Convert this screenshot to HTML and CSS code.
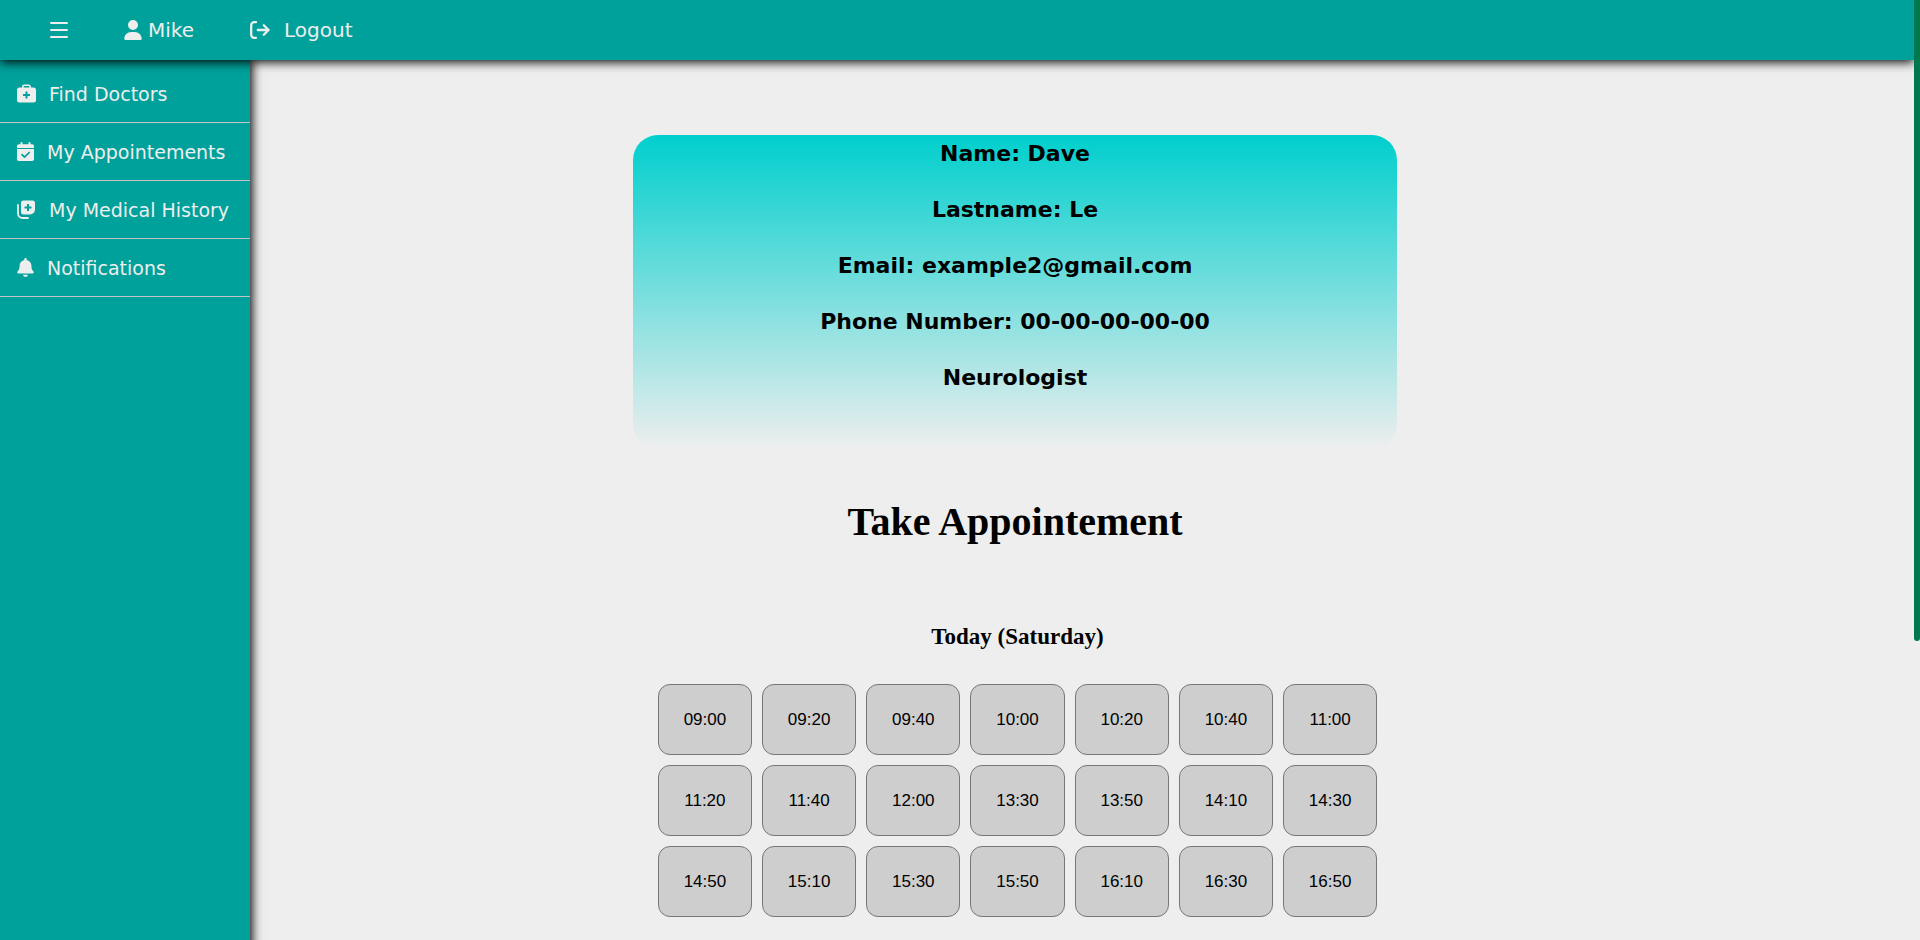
FILE: index.html
```html
<!DOCTYPE html>
<html lang="en">
<head>
<meta charset="utf-8">
<title>Take Appointement</title>
<link rel="stylesheet" href="styles.css">
</head>
<body>
<div class="page">
  <header class="topbar">
    <button class="menu-toggle" type="button" aria-label="Toggle menu">
      <svg class="icon-bars" viewBox="0 0 18 16" aria-hidden="true"><path d="M1 1h16M1 8h16M1 15h16" fill="none" stroke="currentColor" stroke-width="2" stroke-linecap="round"/></svg>
    </button>
    <a class="user" href="#profile">
      <svg class="icon-user" viewBox="0 0 448 512" aria-hidden="true"><path fill="currentColor" d="M224 256A128 128 0 1 0 224 0a128 128 0 1 0 0 256zm-45.700 48C79.800 304 0 383.800 0 482.300 0 498.700 13.300 512 29.700 512h388.600c16.400 0 29.700-13.300 29.700-29.700 0-98.500-79.800-178.300-178.300-178.300z"/></svg>
      <span>Mike</span>
    </a>
    <a class="logout" href="#logout">
      <svg class="icon-logout" viewBox="0 0 20 18" aria-hidden="true"><g fill="none" stroke="currentColor" stroke-width="2.300" stroke-linecap="round" stroke-linejoin="round"><path d="M6 1.200H4.200a3 3 0 0 0-3 3v9.600a3 3 0 0 0 3 3H6"/><path d="M7.800 9H18.500M13.800 4.200l4.800 4.800-4.800 4.800"/></g></svg>
      <span>Logout</span>
    </a>
  </header>

  <div class="body">
    <nav class="sidebar" aria-label="Main">
      <ul class="nav-list">
        <li><a class="nav-link" href="#doctors">
          <svg class="nav-icon wide" viewBox="0 0 19 18" aria-hidden="true"><path fill="none" stroke="currentColor" stroke-width="1.600" d="M5.800 4V2.300a1.500 1.500 0 0 1 1.500-1.500h4.400a1.500 1.500 0 0 1 1.500 1.500V4"/><path fill="currentColor" fill-rule="evenodd" d="M2.500 3h14A2.500 2.500 0 0 1 19 5.500v10a2.500 2.500 0 0 1-2.500 2.500h-14A2.500 2.500 0 0 1 0 15.500v-10A2.500 2.500 0 0 1 2.500 3zM8.500 7v2.500H6v2h2.500V14h2v-2.500H13v-2h-2.500V7z"/></svg>
          <span>Find Doctors</span></a></li>
        <li><a class="nav-link" href="#appointements">
          <svg class="nav-icon" viewBox="0 0 17 19" aria-hidden="true"><path fill="currentColor" d="M3.500 1a1 1 0 0 1 2 0v1.200h6V1a1 1 0 0 1 2 0v1.200h1.700A1.800 1.800 0 0 1 17 4v2H0V4a1.800 1.800 0 0 1 1.800-1.800h1.700z"/><path fill="currentColor" d="M0 7h17v10.200a1.800 1.800 0 0 1-1.800 1.800H1.800A1.800 1.800 0 0 1 0 17.200z"/><path class="cutout" d="M5 12.700l2.500 2.500 4.700-4.700" stroke-width="1.700" fill="none" stroke-linecap="round" stroke-linejoin="round"/></svg>
          <span>My Appointements</span></a></li>
        <li><a class="nav-link" href="#history">
          <svg class="nav-icon wide" viewBox="0 0 19 19" aria-hidden="true"><path fill="none" stroke="currentColor" stroke-width="1.800" stroke-linecap="round" d="M1 5v8.500A4.500 4.500 0 0 0 5.500 18H11"/><path fill="currentColor" fill-rule="evenodd" d="M6.500 0.500h9A2.500 2.500 0 0 1 18 3v6.500a5 5 0 0 1-5 5H6.500A2.500 2.500 0 0 1 4 12V3A2.500 2.500 0 0 1 6.500 .5zM10 4v2.500H7.500v2H10V11h2V8.500h2.500v-2H12V4z"/></svg>
          <span>My Medical History</span></a></li>
        <li><a class="nav-link" href="#notifications">
          <svg class="nav-icon" viewBox="0 0 448 512" aria-hidden="true"><path fill="currentColor" d="M224 0c-17.700 0-32 14.300-32 32v19.200C119 66 64 130.600 64 208v18.800c0 47-17.300 92.400-48.500 127.600l-7.400 8.300c-8.400 9.400-10.400 22.900-5.300 34.400S19.400 416 32 416h384c12.600 0 24-7.400 29.200-18.900s3.100-25-5.300-34.400l-7.400-8.300C401.300 319.200 384 273.900 384 226.800V208c0-77.400-55-142-128-156.800V32c0-17.700-14.300-32-32-32zm45.300 493.300c12-12 18.700-28.300 18.700-45.300H160c0 17 6.700 33.300 18.700 45.300S207 512 224 512s33.300-6.700 45.300-18.700z"/></svg>
          <span>Notifications</span></a></li>
      </ul>
    </nav>

    <main class="content">
      <section class="doctor-card">
        <h2>Name: Dave</h2>
        <h2>Lastname: Le</h2>
        <h2>Email: example2@gmail.com</h2>
        <h2>Phone Number: 00-00-00-00-00</h2>
        <h2>Neurologist</h2>
      </section>
      <h1 class="title">Take Appointement</h1>
      <section class="schedule">
        <h2 class="day">Today (Saturday)</h2>
        <div class="slots">
          <button class="slot" type="button">09:00</button>
          <button class="slot" type="button">09:20</button>
          <button class="slot" type="button">09:40</button>
          <button class="slot" type="button">10:00</button>
          <button class="slot" type="button">10:20</button>
          <button class="slot" type="button">10:40</button>
          <button class="slot" type="button">11:00</button>
          <button class="slot" type="button">11:20</button>
          <button class="slot" type="button">11:40</button>
          <button class="slot" type="button">12:00</button>
          <button class="slot" type="button">13:30</button>
          <button class="slot" type="button">13:50</button>
          <button class="slot" type="button">14:10</button>
          <button class="slot" type="button">14:30</button>
          <button class="slot" type="button">14:50</button>
          <button class="slot" type="button">15:10</button>
          <button class="slot" type="button">15:30</button>
          <button class="slot" type="button">15:50</button>
          <button class="slot" type="button">16:10</button>
          <button class="slot" type="button">16:30</button>
          <button class="slot" type="button">16:50</button>
        </div>
      </section>
    </main>
  </div>
</div>
<div class="scrollbar" aria-hidden="true"><div class="scroll-thumb"></div></div>
</body>
</html>
```
FILE: styles.css
```css
* {
  box-sizing: border-box;
}

body {
  margin: 0;
  min-height: 100vh;
  display: flex;
  background: #eeeeee;
  color: #000;
  font-family: "Liberation Serif", "Times New Roman", serif;
}

h1,
h2,
ul {
  margin: 0;
  padding: 0;
}

.page {
  flex: 1;
  display: flex;
  flex-direction: column;
  overflow: hidden;
}

.topbar {
  position: relative;
  z-index: 2;
  display: flex;
  align-items: center;
  height: 60px;
  padding-left: 50px;
  background: #00a19b;
  color: #eeeeee;
  font: 20px/24px "DejaVu Sans", Verdana, sans-serif;
  box-shadow: 0 2px 10px #000;
}

.topbar a {
  display: flex;
  align-items: center;
  color: inherit;
  text-decoration: none;
}

.menu-toggle {
  display: flex;
  padding: 0;
  border: 0;
  background: none;
  color: inherit;
}

.icon-bars {
  width: 18px;
  height: 16px;
}

.user {
  margin-left: 56px;
  gap: 6px;
}

.icon-user {
  width: 18px;
  height: 20px;
}

.logout {
  margin-left: 56px;
  gap: 14px;
}

.icon-logout {
  width: 20px;
  height: 18px;
}

.body {
  flex: 1;
  display: flex;
}

/* Runs past the page's bottom edge so that its shadow does not fade there. */
.sidebar {
  flex: 0 0 250px;
  margin-bottom: -20px;
  padding-top: 5px;
  background: #00a19b;
  box-shadow: 0 0 10px 2px #000;
}

.nav-list {
  list-style: none;
}

.nav-link {
  display: flex;
  align-items: center;
  gap: 13px;
  height: 58px;
  padding-left: 17px;
  border-bottom: 1px solid #c4c4c4;
  color: #eeeeee;
  font: 19px/24px "DejaVu Sans", Verdana, sans-serif;
  text-decoration: none;
  white-space: nowrap;
}

.nav-icon {
  width: 17px;
  height: 19px;
}

.nav-icon.wide {
  width: 19px;
}

.cutout {
  stroke: #00a19b;
}

.content {
  flex: 1;
  padding: 75px 27% 0 20%;
}

.doctor-card {
  display: flex;
  flex-direction: column;
  gap: 28px;
  padding: 5px 0 57px;
  border-radius: 25px;
  background: linear-gradient(#00cfcd, #eeeeee);
  text-align: center;
}

.doctor-card h2 {
  font: bold 22px/28px "DejaVu Sans", Verdana, sans-serif;
}

.title {
  margin-top: 50px;
  font-size: 40px;
  line-height: 46px;
  text-align: center;
}

.schedule {
  margin: 79px 20px 0 25px;
}

.day {
  font-size: 23px;
  line-height: 26px;
  text-align: center;
}

.slots {
  display: grid;
  grid-template-columns: repeat(7, 1fr);
  gap: 10px;
  margin-top: 34px;
}

.slot {
  height: 71px;
  padding: 0;
  border: 1px solid #777777;
  border-radius: 12px;
  background: #cecece;
  color: #000;
  font: 17px/20px "Liberation Sans", Arial, sans-serif;
}

.scrollbar {
  flex: 0 0 6px;
}

.scroll-thumb {
  height: 641px;
  border-radius: 0 0 3px 3px;
  background: #00784e;
}
```
